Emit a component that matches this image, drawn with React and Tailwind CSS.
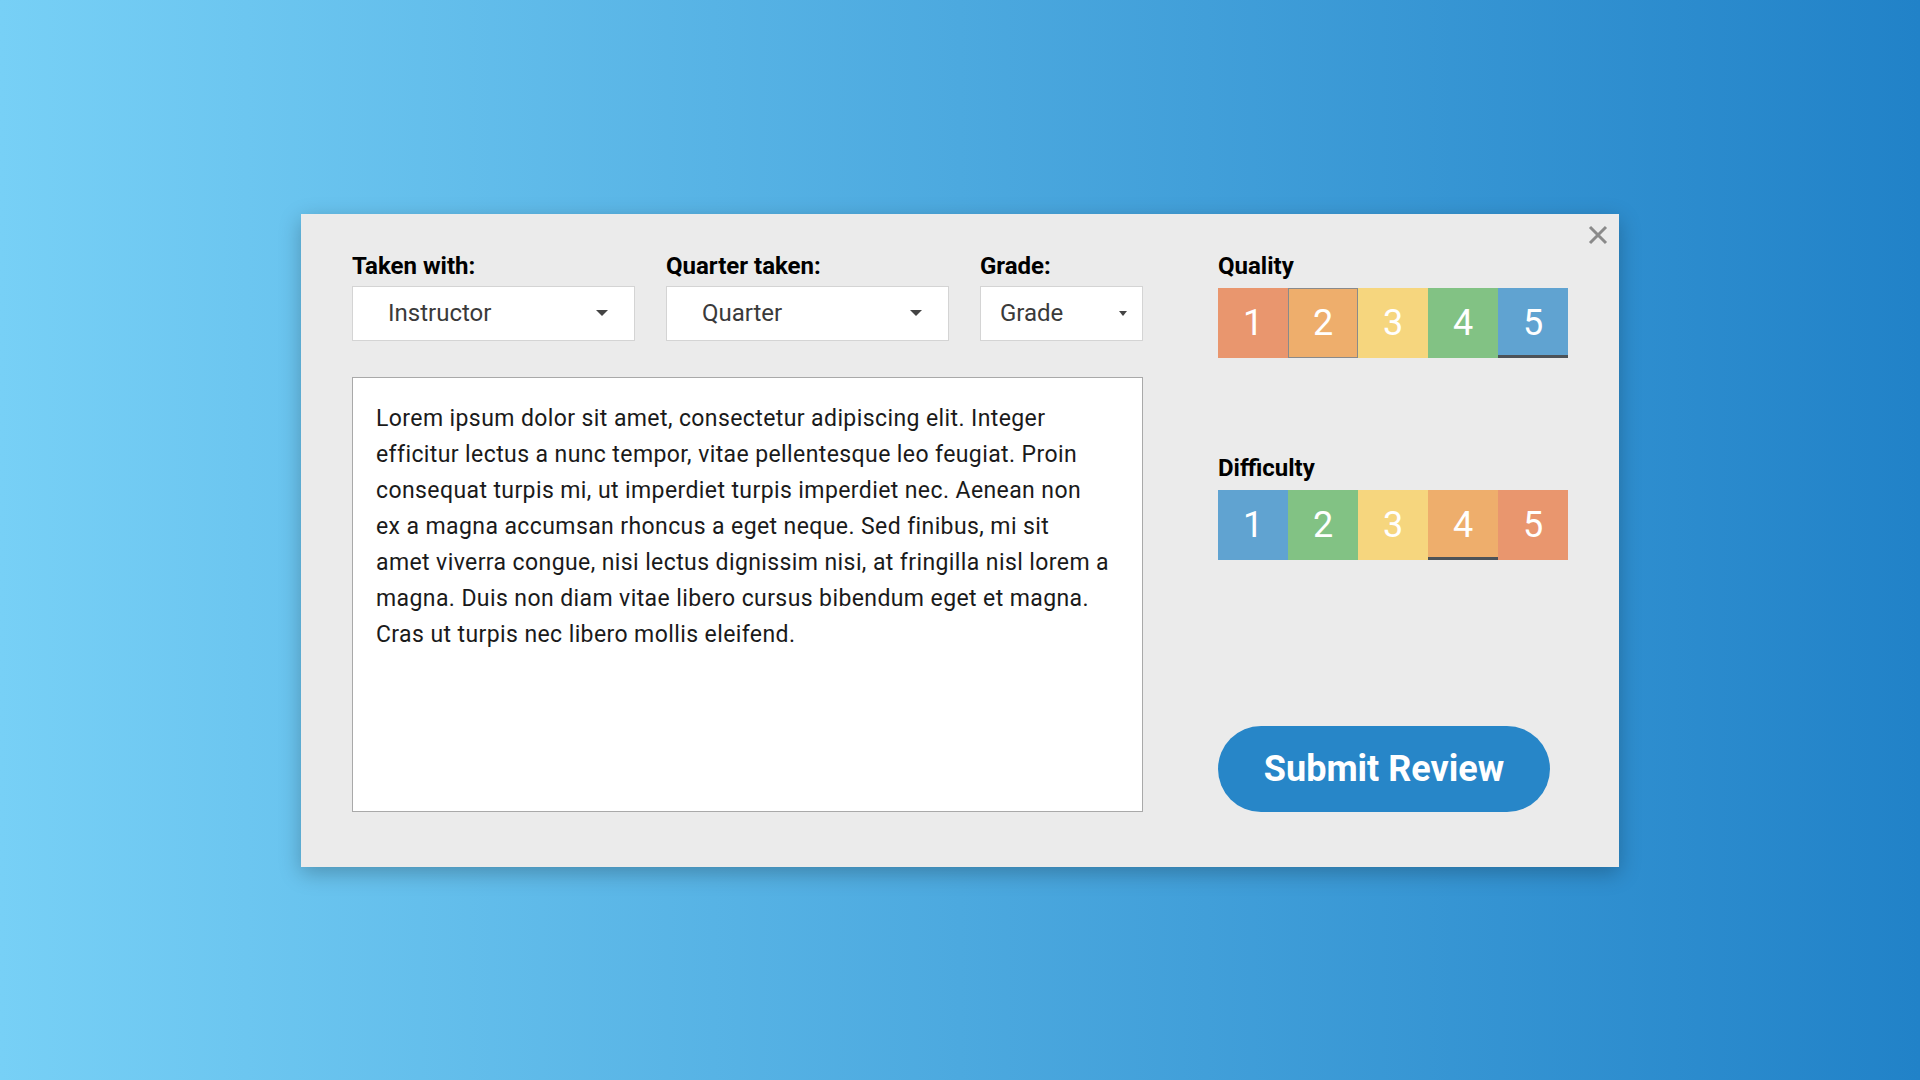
import React, { useState } from "react";

const REVIEW_TEXT =
  "Lorem ipsum dolor sit amet, consectetur adipiscing elit. Integer\n" +
  "efficitur lectus a nunc tempor, vitae pellentesque leo feugiat. Proin\n" +
  "consequat turpis mi, ut imperdiet turpis imperdiet nec. Aenean non\n" +
  "ex a magna accumsan rhoncus a eget neque. Sed finibus, mi sit\n" +
  "amet viverra congue, nisi lectus dignissim nisi, at fringilla nisl lorem a\n" +
  "magna. Duis non diam vitae libero cursus bibendum eget et magna.\n" +
  "Cras ut turpis nec libero mollis eleifend.";

const QUALITY_COLORS = ["bg-[#e9966e]", "bg-[#eeae6c]", "bg-[#f6d67e]", "bg-[#82c284]", "bg-[#60a3d1]"];
const DIFFICULTY_COLORS = ["bg-[#60a3d1]", "bg-[#82c284]", "bg-[#f6d67e]", "bg-[#eeae6c]", "bg-[#e9966e]"];

const Caret = ({ small }) =>
  small ? (
    <svg width="8" height="5" viewBox="0 0 8 5" className="shrink-0">
      <path d="M0 0h8L4 5z" fill="#444" />
    </svg>
  ) : (
    <svg width="12" height="6" viewBox="0 0 12 6" className="shrink-0">
      <path d="M0 0h12L6 6z" fill="#444" />
    </svg>
  );

const SelectBox = ({ label, value, width, padLeft, padRight, small }) => (
  <div className="flex flex-col gap-[6px]" style={{ width }}>
    <span className="text-[24px] leading-[28px] font-bold text-black">{label}</span>
    <button
      type="button"
      className={`flex h-[55px] w-full items-center justify-between border border-[#d4d4d4] bg-white text-[24px] text-[#3a3a3a] ${padLeft} ${padRight}`}
    >
      <span>{value}</span>
      <Caret small={small} />
    </button>
  </div>
);

const Scale = ({ label, colors, selected, hovered, onPick, className }) => (
  <div className={`flex flex-col gap-[8px] ${className}`}>
    <span className="text-[24px] leading-[28px] font-bold text-black">{label}</span>
    <div className="flex">
      {colors.map((c, i) => {
        const n = i + 1;
        const isSel = selected === n;
        const isHover = hovered === n;
        return (
          <button
            key={n}
            type="button"
            onClick={() => onPick(n)}
            className={`box-border flex h-[70px] w-[70px] items-center justify-center text-[36px] font-normal leading-none text-white ${c} ${
              isHover ? "border border-[#8a8a8a]" : ""
            } ${isSel ? "border-b-[3px] border-b-[#4d5358] pt-[3px]" : ""}`}
          >
            {n}
          </button>
        );
      })}
    </div>
  </div>
);

export default function App() {
  const [quality, setQuality] = useState(5);
  const [difficulty, setDifficulty] = useState(4);

  return (
    <div
      className="flex min-h-screen w-full items-center justify-center bg-[linear-gradient(90deg,#77d0f6,#2182c8)]"
      style={{ fontFamily: "Roboto, 'Noto Sans', Arial, sans-serif" }}
    >
      <div className="relative flex h-[653px] w-[1318px] gap-[75px] bg-[#ebebeb] pl-[51px] pt-[38px] shadow-[0_6px_20px_rgba(0,0,0,0.25)]">
        <button type="button" className="absolute right-[11px] top-[11px]" aria-label="Close">
          <svg width="20" height="20" viewBox="0 0 20 20">
            <path d="M2 2L18 18M18 2L2 18" stroke="#8a8a8a" strokeWidth="3" />
          </svg>
        </button>

        {/* left column */}
        <div className="flex w-[791px] flex-col">
          <div className="flex gap-[31px]">
            <SelectBox label="Taken with:" value="Instructor" width={283} padLeft="pl-[35px]" padRight="pr-[26px]" />
            <SelectBox label="Quarter taken:" value="Quarter" width={283} padLeft="pl-[35px]" padRight="pr-[26px]" />
            <SelectBox label="Grade:" value="Grade" width={163} padLeft="pl-[19px]" padRight="pr-[15px]" small />
          </div>
          <textarea
            defaultValue={REVIEW_TEXT}
            className="mt-[36px] h-[435px] w-full resize-none overflow-hidden border border-[#a9a9a9] bg-white pl-[23px] pr-[4px] pt-[23px] text-[23px] leading-[36px] tracking-[0.4px] text-[#1a1a1a] outline-none"
            style={{ fontFamily: "Roboto, 'Noto Sans', Arial, sans-serif" }}
          />
        </div>

        {/* right column */}
        <div className="flex w-[350px] flex-col">
          <Scale label="Quality" colors={QUALITY_COLORS} selected={quality} hovered={2} onPick={setQuality} />
          <Scale
            label="Difficulty"
            colors={DIFFICULTY_COLORS}
            selected={difficulty}
            onPick={setDifficulty}
            className="mt-[96px]"
          />
          <button
            type="button"
            className="mt-[166px] h-[86px] w-[332px] rounded-full bg-[#2786c8] text-[36px] font-bold text-white"
          >
            Submit Review
          </button>
        </div>
      </div>
    </div>
  );
}
